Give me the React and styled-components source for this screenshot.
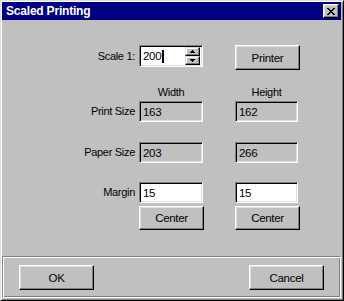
import React from 'react'
import styled, { createGlobalStyle } from 'styled-components'

const GlobalStyle = createGlobalStyle`
  html, body {
    margin: 0;
    padding: 0;
    background: #c0c0c0;
  }
  body {
    font-family: "Liberation Sans", Arial, sans-serif;
    font-size: 11px;
    letter-spacing: -0.3px;
    color: #000;
  }
`

export default function App() {
  return (
    <>
      <GlobalStyle />
      <Window>
        <TitleBar>
          <Title>Scaled Printing</Title>
          <CloseButton aria-label="Close">
            <svg width="8" height="7" viewBox="0 0 8 7">
              <path
                fill="#000"
                d="M0 0h2v1H0zM6 0h2v1H6zM1 1h2v1H1zM5 1h2v1H5zM2 2h4v1H2zM3 3h2v1H3zM2 4h4v1H2zM1 5h2v1H1zM5 5h2v1H5zM0 6h2v1H0zM6 6h2v1H6z"
              />
            </svg>
          </CloseButton>
        </TitleBar>

        <Body>
          <Row $top={25} $align="start">
            <Label $h={22}>Scale 1:</Label>
            <Field $w={64} $h={22} $white>
              <Value>
                200
                <Caret />
              </Value>
              <Spin>
                <SpinButton>
                  <svg width="5" height="3" viewBox="0 0 5 3">
                    <path fill="#000" d="M2 0h1v1H2zM1 1h3v1H1zM0 2h5v1H0z" />
                  </svg>
                </SpinButton>
                <SpinButton>
                  <svg width="5" height="3" viewBox="0 0 5 3">
                    <path fill="#000" d="M0 0h5v1H0zM1 1h3v1H1zM2 2h1v1H2z" />
                  </svg>
                </SpinButton>
              </Spin>
            </Field>
            <Button $w={65} $h={25}>Printer</Button>
          </Row>

          <Row $top={15}>
            <span />
            <Heading $w={64}>Width</Heading>
            <Heading $w={63}>Height</Heading>
          </Row>

          <Row $top={2}>
            <Label $h={21}>Print Size</Label>
            <Field $w={64} $h={21}>
              <Value>163</Value>
            </Field>
            <Field $w={63} $h={21}>
              <Value>162</Value>
            </Field>
          </Row>

          <Row $top={20}>
            <Label $h={21}>Paper Size</Label>
            <Field $w={64} $h={21}>
              <Value>203</Value>
            </Field>
            <Field $w={63} $h={21}>
              <Value>266</Value>
            </Field>
          </Row>

          <Row $top={19}>
            <Label $h={21}>Margin</Label>
            <Field $w={64} $h={21} $white>
              <Value>15</Value>
            </Field>
            <Field $w={63} $h={21} $white>
              <Value>15</Value>
            </Field>
          </Row>

          <Row $top={3}>
            <span />
            <Button $w={65} $h={24}>Center</Button>
            <Button $w={65} $h={24}>Center</Button>
          </Row>
        </Body>

        <Footer>
          <Button $w={75} $h={25}>OK</Button>
          <Button $w={75} $h={25}>Cancel</Button>
        </Footer>
      </Window>
    </>
  )
}

const Window = styled.div`
  width: 344px;
  height: 301px;
  box-sizing: border-box;
  background: #c0c0c0;
  border: 1px solid;
  border-color: #dfdfdf #000 #000 #dfdfdf;
  box-shadow: inset 1px 1px #fff, inset -1px -1px #808080;
  padding: 1px 2px 2px 1px;
  display: flex;
  flex-direction: column;
`

const TitleBar = styled.div`
  height: 18px;
  background: #000080;
  display: flex;
  align-items: center;
  justify-content: space-between;
  padding: 0 2px 0 4px;
  flex-shrink: 0;
`

const Title = styled.span`
  color: #fff;
  font-weight: bold;
  font-size: 12px;
  letter-spacing: -0.2px;
`

const CloseButton = styled.button`
  width: 16px;
  height: 14px;
  padding: 0;
  box-sizing: border-box;
  background: #c0c0c0;
  border: 1px solid;
  border-color: #fff #000 #000 #fff;
  box-shadow: inset -1px -1px #808080, inset 1px 1px #dfdfdf;
  display: flex;
  align-items: center;
  justify-content: center;

  svg {
    display: block;
    margin-left: -1px;
  }
`

const Body = styled.div`
  flex: 1;
  display: flex;
  flex-direction: column;
`

const Row = styled.div`
  display: grid;
  grid-template-columns: 137px 96px 66px;
  align-items: ${(p) => p.$align || 'center'};
  margin-top: ${(p) => p.$top}px;
`

const Label = styled.span`
  height: ${(p) => p.$h}px;
  line-height: ${(p) => p.$h}px;
  text-align: right;
  padding-right: 4px;
  white-space: nowrap;
`

const Heading = styled.span`
  width: ${(p) => p.$w}px;
  height: 14px;
  line-height: 14px;
  text-align: center;
`

const Field = styled.div`
  width: ${(p) => p.$w}px;
  height: ${(p) => p.$h}px;
  box-sizing: border-box;
  background: ${(p) => (p.$white ? '#fff' : '#c0c0c0')};
  border: 1px solid;
  border-color: #808080 #fff #fff #808080;
  box-shadow: inset 1px 1px #000, inset -1px -1px #dfdfdf;
  padding: 1px 2px 1px 3px;
  display: flex;
  align-items: center;
`

const Value = styled.span`
  flex: 1;
  display: flex;
  align-items: center;
  font-size: 11.5px;
`

const Caret = styled.span`
  width: 2px;
  height: 13px;
  background: #000;
  margin-left: 1px;
`

const Spin = styled.div`
  width: 15px;
  height: 18px;
  display: flex;
  flex-direction: column;
`

const SpinButton = styled.div`
  flex: 1;
  box-sizing: border-box;
  background: #c0c0c0;
  border: 1px solid;
  border-color: #dfdfdf #000 #000 #dfdfdf;
  box-shadow: inset -1px -1px #808080, inset 1px 1px #fff;
  display: flex;
  align-items: center;
  justify-content: center;

  svg {
    display: block;
  }
`

const Button = styled.button`
  width: ${(p) => p.$w}px;
  height: ${(p) => p.$h}px;
  box-sizing: border-box;
  padding: 0;
  background: #c0c0c0;
  border: 1px solid;
  border-color: #fff #000 #000 #fff;
  box-shadow: inset -1px -1px #808080, inset 1px 1px #dfdfdf;
  font-family: "Liberation Sans", Arial, sans-serif;
  font-size: 11.5px;
  letter-spacing: -0.3px;
  color: #000;
`

const Footer = styled.div`
  height: 42px;
  box-sizing: border-box;
  flex-shrink: 0;
  border: 1px solid;
  border-color: #808080 #fff #fff #808080;
  box-shadow: inset 1px 1px #fff, inset -1px -1px #808080;
  display: flex;
  align-items: flex-start;
  justify-content: space-between;
  padding: 8px 16px 0 16px;
`
